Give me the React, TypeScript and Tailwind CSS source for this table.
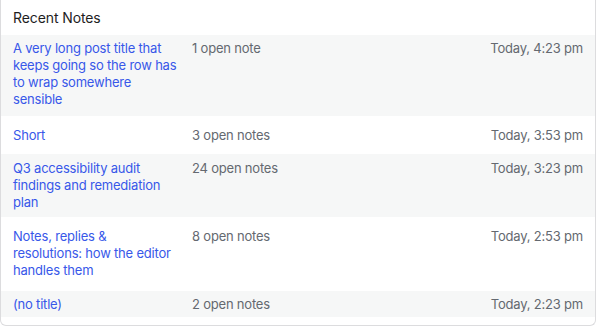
const notes = [
  { title: 'A very long post title that keeps going so the row has to wrap somewhere sensible', count: '1 open note', time: 'Today, 4:23 pm', row: 'bg-[#f6f7f7] pt-[5px] pb-[8px]' },
  { title: 'Short', count: '3 open notes', time: 'Today, 3:53 pm', row: 'bg-white pt-[11px] pb-[10px]' },
  { title: 'Q3 accessibility audit findings and remediation plan', count: '24 open notes', time: 'Today, 3:23 pm', row: 'bg-[#f6f7f7] pt-[6px] pb-[6px]' },
  // keep "resolutions: how" together so the break lands where the original's font put it
  { title: 'Notes, replies & resolutions:\u00a0how the editor handles them', count: '8 open notes', time: 'Today, 2:53 pm', row: 'bg-white pt-[11px] pb-[12px]' },
  { title: '(no title)', count: '2 open notes', time: 'Today, 2:23 pm', row: 'bg-[#f6f7f7] pt-[5px] pb-[4px]' },
];

export default function App() {
  return (
    <div className="w-[596px] h-[329px] bg-white font-['Inter',sans-serif]">
      <div className="h-[326px] border-x border-b border-[#dcdcde] rounded-b-[6px] bg-white">
        <h3 className="h-[35px] px-3 pt-[9px] text-[14px] leading-[17px] tracking-[-0.1px] text-[#1e1e1e]">Recent Notes</h3>
        <div>
          {notes.map((note, i) => (
            <div key={i} className={`grid grid-cols-[166px_1fr_auto] gap-x-[13px] px-3 text-[13px] leading-[17px] tracking-[-0.2px] ${note.row}`}>
              <a href="#" className="text-[#3858e9]">{note.title}</a>
              <span className="text-[#646970]">{note.count}</span>
              <span className="text-right text-[#646970]">{note.time}</span>
            </div>
          ))}
        </div>
      </div>
    </div>
  );
}
